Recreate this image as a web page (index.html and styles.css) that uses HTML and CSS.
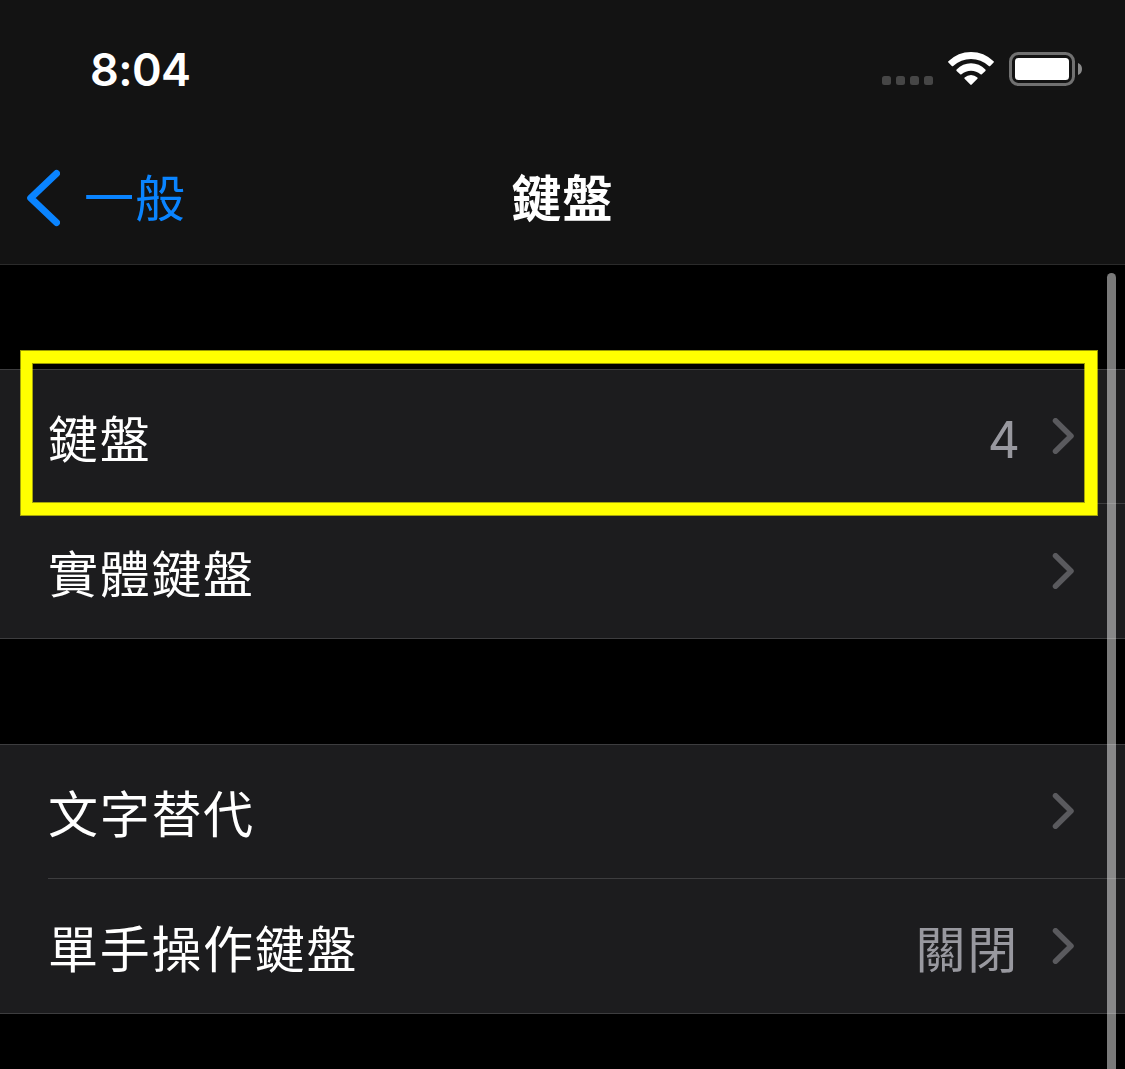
FILE: index.html
```html
<!DOCTYPE html>
<html lang="zh-Hant">
<head>
<meta charset="utf-8">
<title>鍵盤</title>
<link rel="stylesheet" href="styles.css">
</head>
<body>
<div class="screen">
  <header class="top">
    <div class="status">
      <span class="time">8:04</span>
      <div class="indicators">
        <svg class="dots" width="52" height="10" viewBox="0 0 52 10"><g fill="#464646"><rect x="0" y="0" width="9" height="9" rx="2.5"/><rect x="14" y="0" width="9" height="9" rx="2.5"/><rect x="28" y="0" width="9" height="9" rx="2.5"/><rect x="42" y="0" width="9" height="9" rx="2.5"/></g></svg>
        <svg class="wifi" width="46" height="34" viewBox="0 0 46 34"><g fill="#fff"><path d="M.4 9.3Q-.2 10 .4 10.600L3.800 14Q4.500 14.700 5.200 14Q13 7 23 7T40.800 14Q41.500 14.700 42.200 14L45.600 10.600Q46.200 10 45.600 9.300Q36 0 23 0T.4 9.300Z"/><path d="M8.600 17.600Q8 18.300 8.600 18.900L12.200 22.300Q12.800 22.800 13.500 22.300Q17.600 18.700 23 18.700T32.500 22.300Q33.200 22.800 33.800 22.300L37.400 18.900Q38 18.300 37.400 17.600Q31.200 11.200 23 11.200T8.600 17.600Z"/><path d="M16.600 25.500Q16 26.200 16.600 26.800L22.300 32.600Q23 33.300 23.700 32.600L29.400 26.800Q30 26.200 29.400 25.500Q26.600 22.900 23 22.900T16.600 25.500Z"/></g></svg>
        <svg class="battery" width="73" height="34" viewBox="0 0 73 34"><rect x="1.500" y="1.500" width="63" height="31" rx="8" fill="none" stroke="#717171" stroke-width="3"/><rect x="6" y="6" width="54" height="22" rx="3.500" fill="#fff"/><path d="M69 11Q73 12.500 73 17T69 23Z" fill="#8a8a8a"/></svg>
      </div>
    </div>
    <nav class="nav">
      <a class="back"><svg width="34" height="58" viewBox="0 0 34 58"><path d="M30.500 4.500L4.700 29L30.500 53.500" fill="none" stroke="#0a84ff" stroke-width="7" stroke-linecap="round" stroke-linejoin="round"/></svg><span class="back-label">一般</span></a>
      <h1 class="title">鍵盤</h1>
      <span></span>
    </nav>
  </header>
  <main class="content">
    <section class="group">
      <div class="row"><span class="label">鍵盤</span><span class="value digit">4</span><svg class="chevron" width="22" height="36" viewBox="0 0 22 36"><path d="M3.500 2.800L19 18L3.500 33.200"/></svg></div>
      <div class="row"><span class="label">實體鍵盤</span><svg class="chevron" width="22" height="36" viewBox="0 0 22 36"><path d="M3.500 2.800L19 18L3.500 33.200"/></svg></div>
    </section>
    <section class="group">
      <div class="row"><span class="label">文字替代</span><svg class="chevron" width="22" height="36" viewBox="0 0 22 36"><path d="M3.500 2.800L19 18L3.500 33.200"/></svg></div>
      <div class="row"><span class="label">單手操作鍵盤</span><span class="value">關閉</span><svg class="chevron" width="22" height="36" viewBox="0 0 22 36"><path d="M3.500 2.800L19 18L3.500 33.200"/></svg></div>
    </section>
  </main>
  <div class="highlight"></div>
  <div class="scrollbar"></div>
</div>
</body>
</html>
```
FILE: styles.css
```css
* { box-sizing: border-box; }
body {
  margin: 0;
  background: #000;
  color: #fff;
  font-family: "Noto Sans CJK TC", sans-serif;
}
svg { display: block; flex: none; }
.screen {
  position: relative;
  width: 1125px;
  height: 1069px;
  overflow: hidden;
}
.top {
  height: 265px;
  background: #131313;
  border-bottom: 1px solid #2b2b2b;
}
.status {
  height: 132px;
  display: flex;
  justify-content: space-between;
  padding: 0 43px 0 90px;
}
.time {
  padding-top: 42px;
  font: 600 45px/56px Inter, sans-serif;
  letter-spacing: -.6px;
}
.indicators {
  display: flex;
  align-items: flex-start;
  padding-top: 52px;
}
.dots { margin: 24px 14px 0 0; }
.wifi { margin-right: 15px; }
.nav {
  height: 132px;
  display: grid;
  grid-template-columns: 1fr auto 1fr;
  align-items: center;
  padding: 0 26px;
}
.back {
  display: flex;
  align-items: center;
  color: #0a84ff;
}
.back-label {
  padding: 0 0 6px 24px;
  font-size: 50px;
  line-height: 60px;
  letter-spacing: 1px;
}
.title {
  margin: 0;
  padding-bottom: 6px;
  font-size: 50px;
  line-height: 60px;
  font-weight: 700;
  letter-spacing: 1px;
}
.content {
  display: flex;
  flex-direction: column;
  gap: 105px;
  padding-top: 104px;
}
.group {
  border: solid #3d3d3f;
  border-width: 1px 0;
  background: #1c1c1e;
}
.row {
  height: 134px;
  margin-left: 48px;
  padding-right: 51px;
  display: flex;
  align-items: center;
}
.row:first-child { border-bottom: 1px solid #3d3d3f; }
.row:first-child .chevron { margin-bottom: 1px; }
.label, .value {
  padding-bottom: 1px;
  font-size: 50px;
  line-height: 60px;
  letter-spacing: 1.7px;
}
.label { flex: 1; }
.value {
  margin-right: 33px;
  color: #98989f;
}
.digit {
  margin-right: 32px;
  padding: 6px 0 0;
  font-family: Inter, sans-serif;
  letter-spacing: 0;
}
.chevron {
  fill: none;
  stroke: #5a5a5e;
  stroke-width: 5.5;
  stroke-linecap: round;
  stroke-linejoin: round;
}
.highlight {
  position: absolute;
  left: 21px;
  top: 351px;
  width: 1076px;
  height: 164px;
  border: solid #ff0;
  border-width: 12px 12px 12px 11px;
  box-shadow: 0 0 0 1px rgba(255, 255, 0, .6), inset 0 0 0 1px rgba(255, 255, 0, .6);
}
.scrollbar {
  position: absolute;
  left: 1107px;
  top: 273px;
  width: 9px;
  height: 820px;
  border-radius: 5px;
  background: rgba(255, 255, 255, .48);
}
```
